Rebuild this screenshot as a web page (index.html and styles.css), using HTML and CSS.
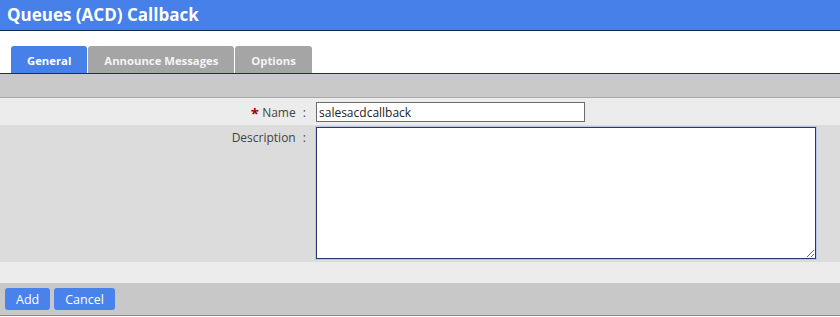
FILE: index.html
```html
<!DOCTYPE html>
<html lang="en">
<head>
    <meta charset="UTF-8">
    <title>Queues (ACD) Callback</title>
    <link rel="stylesheet" href="styles.css">
</head>
<body>
    <div class="page">
        <div class="title-bar">Queues (ACD) Callback</div>

        <div class="tabs">
            <a class="tab active">General</a>
            <a class="tab">Announce Messages</a>
            <a class="tab">Options</a>
        </div>

        <div class="toolbar"></div>

        <div class="form">
            <div class="row light">
                <label class="field-label" for="name"><span class="req">*</span> Name <span class="colon">:</span></label>
                <div class="field"><input type="text" id="name" class="text-input" value="salesacdcallback"></div>
            </div>
            <div class="row dark">
                <label class="field-label" for="description">Description <span class="colon">:</span></label>
                <div class="field"><textarea id="description" class="text-area" autofocus></textarea></div>
            </div>
            <div class="row light spacer"></div>
        </div>

        <div class="footer">
            <button class="btn">Add</button>
            <button class="btn">Cancel</button>
        </div>
    </div>
</body>
</html>
```

FILE: styles.css
```css
/* Queue callback edit form */
body {
    margin: 0;
    font-family: "Open Sans", Arial, sans-serif;
    font-size: 12px;
    color: #333;
    background-color: #fff;
}
.page {
    width: 840px;
}
.title-bar {
    height: 30px;
    line-height: 29px;
    padding-left: 7px;
    background-color: #4680e8;
    border-bottom: 1px solid #17284a;
    color: #fff;
    font-size: 17px;
    font-weight: bold;
}
.tabs {
    display: flex;
    gap: 1px;
    padding: 15px 0 0 11px;
    background-color: #fff;
    border-bottom: 1px solid #1c2f55;
}
.tab {
    height: 27px;
    line-height: 30px;
    padding: 0 16px;
    border-radius: 3px 3px 0 0;
    background-color: #a5a5a5;
    color: #f4f4f4;
    font-weight: bold;
    font-size: 11.3px;
    cursor: pointer;
}
.tab.active {
    background-color: #4680e8;
    color: #fff;
}
.toolbar {
    height: 23px;
    background-color: #c9c9c9;
    border-bottom: 1px solid #a9a9a9;
}
.row {
    display: grid;
    grid-template-columns: 316px 1fr;
}
.row.light {
    background-color: #ececec;
}
.row.dark {
    background-color: #dcdcdc;
}
.field-label {
    text-align: right;
    padding: 6px 10px 0 0;
    color: #444;
}
.row.dark .field-label {
    padding-top: 4px;
}
.colon {
    margin-left: 4px;
}
.req {
    color: #a10000;
    font-weight: bold;
    font-size: 15px;
    line-height: 12px;
    vertical-align: -2px;
}
.field {
    padding: 4px 0 3px;
}
.text-input {
    box-sizing: border-box;
    width: 269px;
    height: 20px;
    padding: 0 2px;
    border: 1px solid #6b6b6b;
    font-family: inherit;
    font-size: 12px;
    color: #222;
    outline: none;
}
.row.dark .field {
    padding: 2px 0 3px;
}
.text-area {
    box-sizing: border-box;
    display: block;
    width: 500px;
    height: 132px;
    border: 1px solid #27396b;
    box-shadow: 0 0 0 1px #b8c8ec;
    font-family: inherit;
    font-size: 12px;
    outline: none;
    caret-color: #1c2f55;
}
.spacer {
    height: 21px;
}
.footer {
    display: flex;
    gap: 4px;
    height: 33px;
    padding: 5px 0 0 5px;
    box-sizing: border-box;
    background-color: #c8c8c8;
    border-bottom: 1px solid #8a8a8a;
}
.btn {
    height: 22px;
    padding: 0 11px;
    border: none;
    border-radius: 3px;
    background-color: #4a82ec;
    color: #fff;
    font-family: inherit;
    font-size: 12.5px;
    cursor: pointer;
}
```
